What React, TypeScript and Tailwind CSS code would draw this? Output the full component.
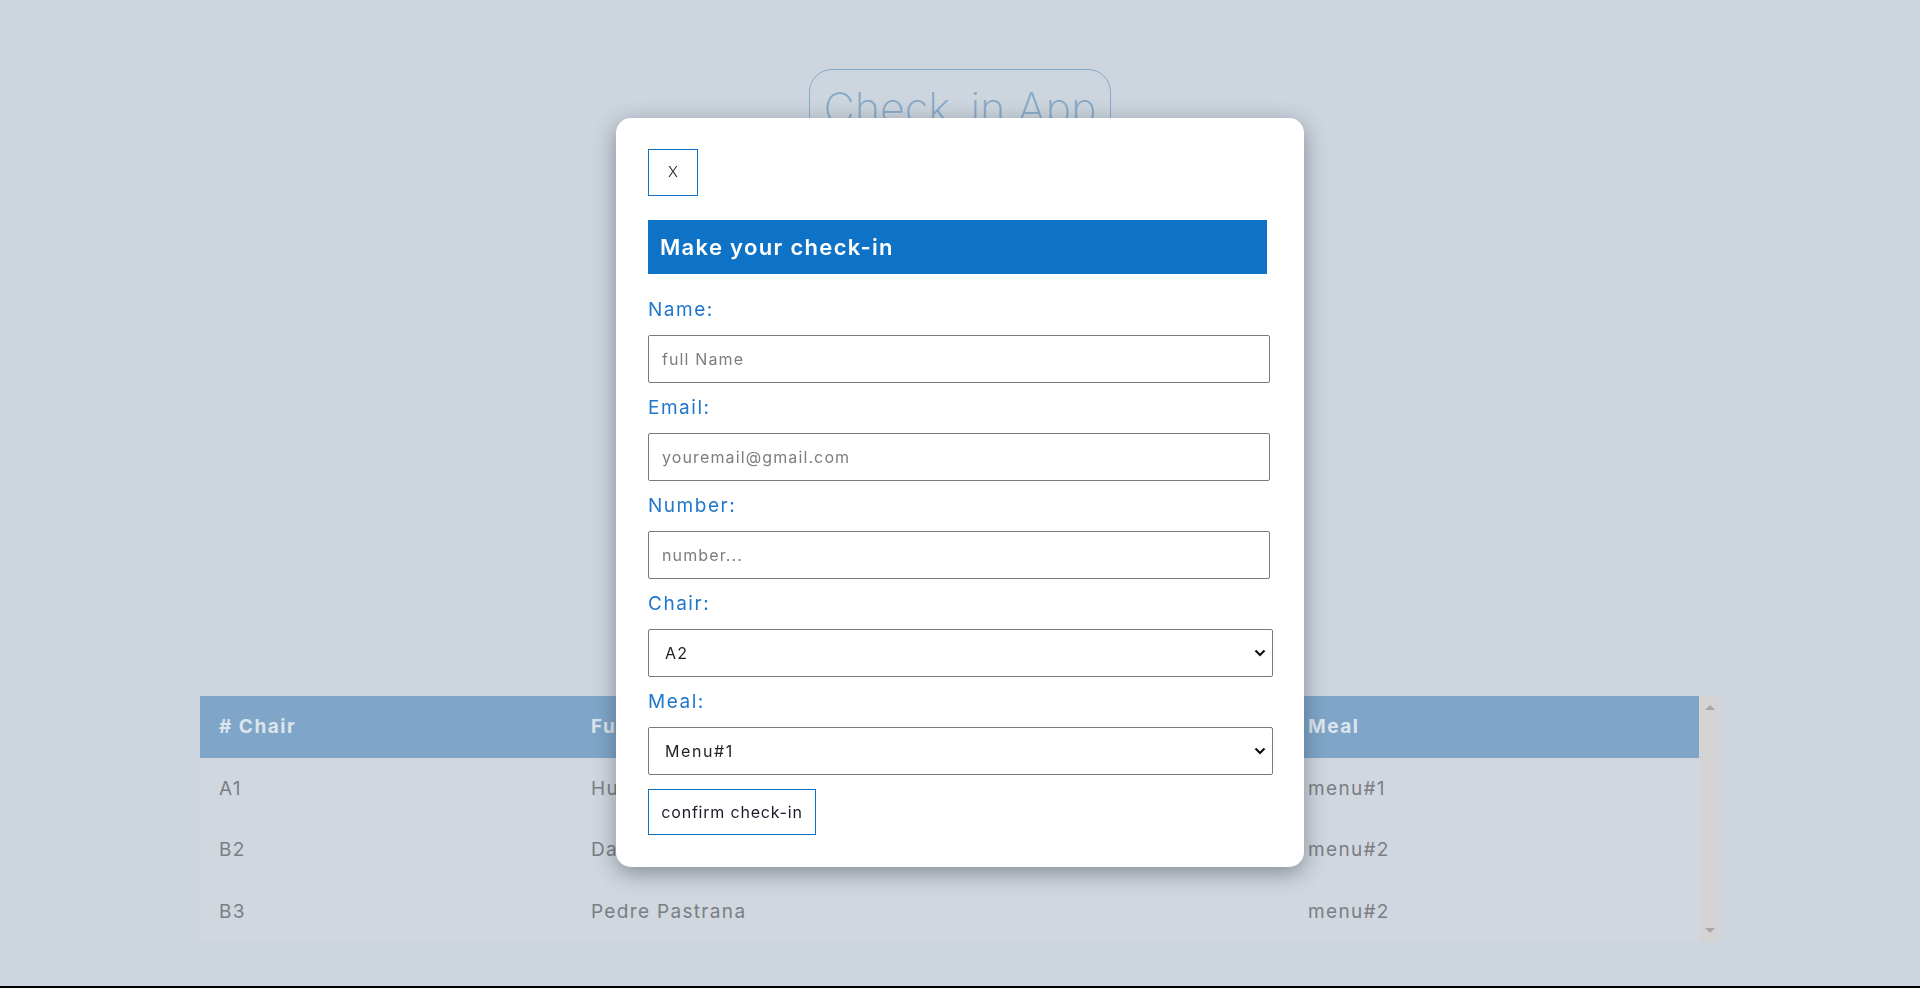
import { useState } from "react";

const guests = [
    { chair: "A1", name: "Hugo Martinez", meal: "menu#1" },
    { chair: "B2", name: "Daniela Rios", meal: "menu#2" },
    { chair: "B3", name: "Pedre Pastrana", meal: "menu#2" },
];

function Chevron() {
    return (
        <svg className="pointer-events-none absolute right-[7px] top-1/2 -translate-y-1/2" width="12" height="8" viewBox="0 0 12 8">
            <path d="M1.5 1.5l4.5 4.5 4.5-4.5" fill="none" stroke="#111" strokeWidth="2.2" />
        </svg>
    );
}

function CheckInModal() {
    const [formData, setFormData] = useState({ name: "", email: "", number: "", chair: "A2", meal: "Menu#1" });

    const handleChange = (e: any) => {
        setFormData({ ...formData, [e.target.name]: e.target.value });
    };

    const fields = [
        { label: "Name:", name: "name", placeholder: "full Name", type: "text" },
        { label: "Email:", name: "email", placeholder: "youremail@gmail.com", type: "email" },
        { label: "Number:", name: "number", placeholder: "number...", type: "text" },
    ];

    return (
        <div className="fixed inset-0 flex justify-center pt-[118px]">
            <div className="h-fit w-[688px] rounded-[15px] bg-white px-8 pt-[31px] pb-8 shadow-[0_6px_22px_rgba(40,50,65,0.45)]">
                <button className="flex h-[47px] w-[50px] items-center justify-center border border-[#1273c6] text-[15px] font-light text-[#222]">
                    X
                </button>
                <h2 className="mt-6 flex h-[54px] w-[619px] items-center bg-[#0e72c6] pl-3 text-[22px] font-semibold tracking-[0.06em] text-white">
                    Make your check-in
                </h2>
                <form className="mt-6 flex flex-col" onSubmit={(e) => e.preventDefault()}>
                    {fields.map((f) => (
                        <div key={f.name} className="mb-[13px] flex flex-col">
                            <label className="mb-[13px] h-6 text-[19px] leading-6 tracking-[0.08em] text-[#2078cc]">{f.label}</label>
                            <input
                                className="h-[48px] w-[622px] rounded-[2px] border border-[#7a7a7a] px-[13px] text-[16px] tracking-[0.07em] text-[#222] placeholder:text-[#7d7d7d] outline-none"
                                name={f.name}
                                type={f.type}
                                value={(formData as any)[f.name]}
                                onChange={handleChange}
                                placeholder={f.placeholder}
                            />
                        </div>
                    ))}
                    <div className="mb-[13px] flex flex-col">
                        <label className="mb-[13px] h-6 text-[19px] leading-6 tracking-[0.08em] text-[#2078cc]">Chair:</label>
                        <div className="relative w-[625px]">
                            <select
                                name="chair"
                                value={formData.chair}
                                onChange={handleChange}
                                className="h-[48px] w-full appearance-none rounded-[2px] border border-[#7a7a7a] bg-white pl-4 text-[16px] tracking-[0.07em] text-[#222]"
                            >
                                <option>A2</option>
                                <option>A3</option>
                                <option>B1</option>
                            </select>
                            <Chevron />
                        </div>
                    </div>
                    <div className="flex flex-col">
                        <label className="mb-[13px] h-6 text-[19px] leading-6 tracking-[0.08em] text-[#2078cc]">Meal:</label>
                        <div className="relative w-[625px]">
                            <select
                                name="meal"
                                value={formData.meal}
                                onChange={handleChange}
                                className="h-[48px] w-full appearance-none rounded-[2px] border border-[#7a7a7a] bg-white pl-4 text-[16px] tracking-[0.1em] text-[#222]"
                            >
                                <option>Menu#1</option>
                                <option>Menu#2</option>
                            </select>
                            <Chevron />
                        </div>
                    </div>
                    <button type="submit" className="mt-[14px] h-[46px] w-[168px] border border-[#1273c6] text-[16px] tracking-[0.05em] text-[#1a1a2a]">
                        confirm check-in
                    </button>
                </form>
            </div>
        </div>
    );
}

export default function App() {
    return (
        <div className="flex h-[988px] flex-col bg-[#cdd5de] font-['Inter',sans-serif]">
            <div className="flex flex-1 flex-col items-center pt-[69px]">
                <h1 className="flex h-[80px] w-[302px] items-start justify-center rounded-[23px] border border-[#86a9c8] pt-[10px] text-[43px] leading-[56px] font-extralight text-[#86a9c8]">
                    Check_in App
                </h1>

                <div className="mt-[547px] flex w-[1520px] bg-[#d0d7df]">
                    <div className="h-[246px] flex-1 overflow-hidden">
                        <div className="grid h-[62px] grid-cols-[372px_717px_1fr] items-center bg-[#7fa6c8] text-[19px] font-bold tracking-[0.08em] text-[#dde5ed]">
                            <div className="pl-[19px]"># Chair</div>
                            <div className="pl-[19px]">Full Name</div>
                            <div className="pl-[19px]">Meal</div>
                        </div>
                        {guests.map((g) => (
                            <div key={g.chair} className="grid h-[61.5px] grid-cols-[372px_717px_1fr] items-center text-[19px] tracking-[0.07em] text-[#7a7e85]">
                                <div className="pl-[19px]">{g.chair}</div>
                                <div className="pl-[19px]">{g.name}</div>
                                <div className="pl-[19px]">{g.meal}</div>
                            </div>
                        ))}
                    </div>
                    <div className="flex w-[21px] flex-col items-center justify-between bg-[#d4d4d4] py-[9px]">
                        <div className="h-0 w-0 border-x-[5px] border-b-[5px] border-x-transparent border-b-[#a6a6a6]" />
                        <div className="h-0 w-0 border-x-[5px] border-t-[5px] border-x-transparent border-t-[#a6a6a6]" />
                    </div>
                </div>
            </div>
            <div className="h-[2px] bg-black" />

            <CheckInModal />
        </div>
    );
}
